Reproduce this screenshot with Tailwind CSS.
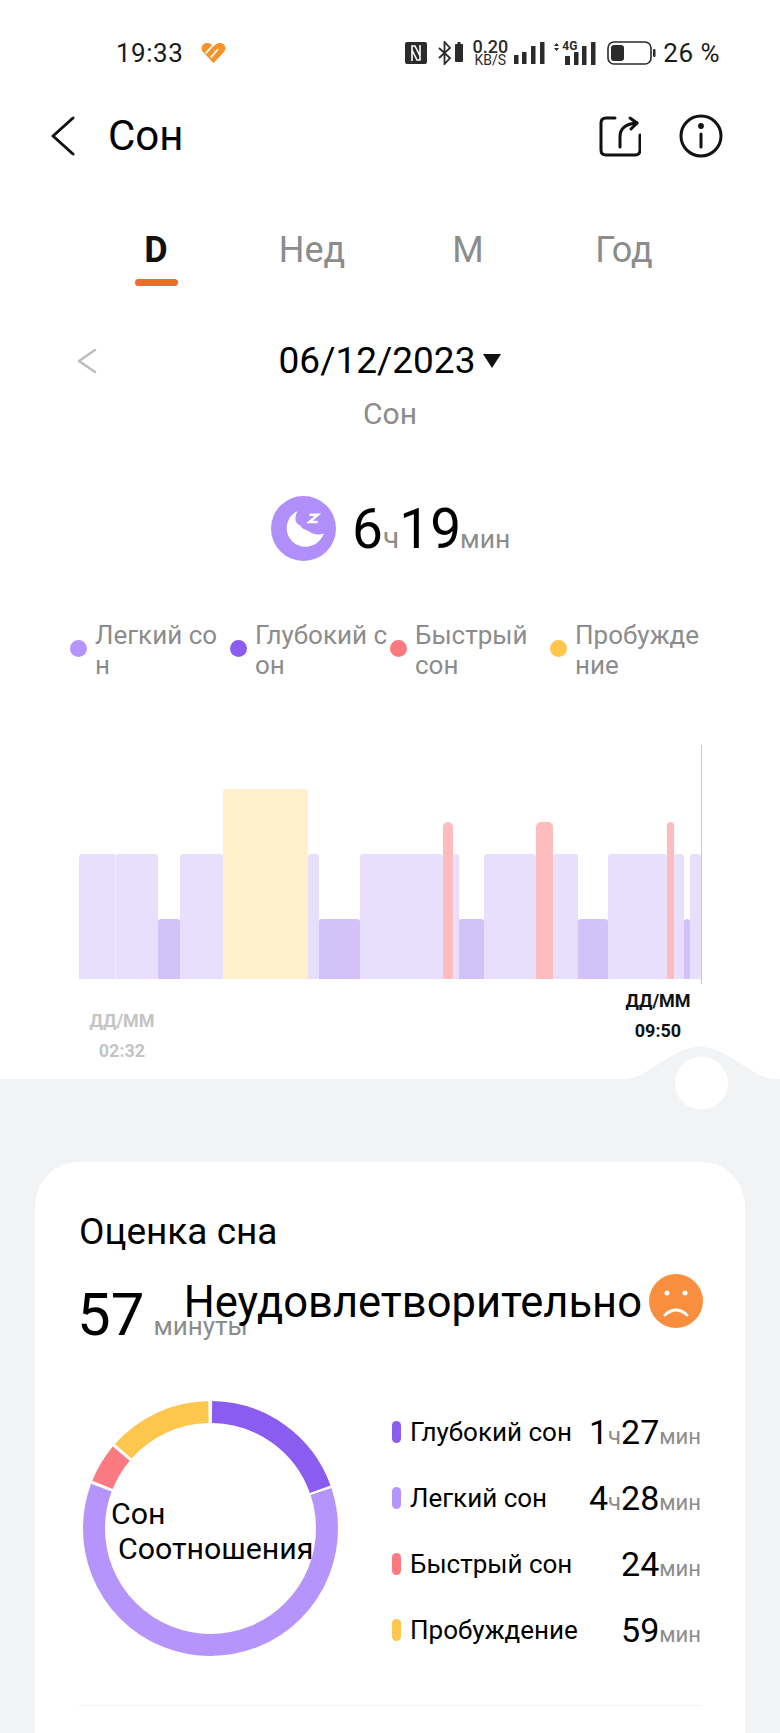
<!DOCTYPE html>
<html lang="ru">
  <head>
    <meta charset="UTF-8" />
    <meta name="viewport" content="width=device-width, initial-scale=1.0" />
    <title>Сон</title>
    <script src="https://cdn.jsdelivr.net/npm/@tailwindcss/browser@4"></script>
  </head>

  <body>
    <div class="relative flex h-[1733px] w-[780px] flex-col overflow-hidden bg-[#f1f3f5] font-['Roboto',sans-serif] text-black">
      <!-- top white part -->
      <div class="flex h-[1079px] flex-col bg-white">
        <!-- status bar -->
        <div class="mt-[38px] flex h-[30px] items-center pl-[116px] pr-[60px] text-[#1c1c1c]">
          <span class="text-[26px] leading-none tracking-[0.5px]">19:33</span>
          <svg class="ml-[18px] h-[20px] w-[25px]" viewBox="0 0 25 20">
            <path d="M12.500 20 L2 9 C-1 5.500 1 0 6 0 C9 0 11 1.500 12.500 4 C14 1.500 16 0 19 0 C24 0 26 5.500 23 9Z" fill="#f7922b" />
            <path d="M4.700 10.300 L12.300 2 M9.700 14.700 L17 6" stroke="#fff" stroke-width="1.800" />
          </svg>
          <svg class="ml-auto h-[22px] w-[22px]" viewBox="0 0 22 22">
            <rect width="22" height="22" rx="2" fill="#2b2b2b" />
            <path d="M7 19 V4 H10 L15 14 V10 M15 3 V18 H12 L7 8 V12" stroke="#fff" stroke-width="1.600" fill="none" />
          </svg>
          <svg class="ml-[11px] h-[24px] w-[25px]" viewBox="0 0 25 24">
            <path d="M1 7 L12 17 L6.500 23 V1 L12 7 L1 17" stroke="#2b2b2b" stroke-width="1.800" fill="none" />
            <rect x="17" y="3" width="8" height="18" rx="1" fill="#2b2b2b" />
            <rect x="19.500" y="1" width="3" height="3" fill="#2b2b2b" />
          </svg>
          <div class="ml-[8px] flex w-[38px] flex-col items-center text-[#2b2b2b]">
            <span class="text-[18px] leading-[14px] font-medium">0.20</span>
            <span class="mt-[1px] text-[14px] leading-[11px]">KB/S</span>
          </div>
          <svg class="ml-[4px] h-[22px] w-[32px]" viewBox="0 0 32 22" fill="#2b2b2b">
            <rect x="1" y="13" width="4.500" height="9" rx="0.500" />
            <rect x="9" y="10" width="4.500" height="12" rx="0.500" />
            <rect x="18" y="4" width="4.500" height="18" rx="0.500" />
            <rect x="27" y="0" width="4.500" height="22" rx="0.500" />
          </svg>
          <div class="relative ml-[8px] h-[24px] w-[44px]">
            <svg class="absolute left-0 top-0 h-[24px] w-[44px]" viewBox="0 0 44 24" fill="#2b2b2b">
              <path d="M1 5 L3.500 2 L6 5Z M1 7 L3.500 10 L6 7Z" />
              <rect x="12" y="15" width="5" height="9" rx="0.500" />
              <rect x="21" y="11" width="4.500" height="13" rx="0.500" />
              <rect x="29" y="5" width="4.500" height="19" rx="0.500" />
              <rect x="38" y="1" width="4.500" height="23" rx="0.500" />
            </svg>
            <span class="absolute left-[9px] top-[-1px] text-[12px] leading-[13px] font-bold text-[#2b2b2b]">4G</span>
          </div>
          <svg class="ml-[10px] h-[24px] w-[50px]" viewBox="0 0 50 24">
            <rect x="1" y="1" width="43" height="22" rx="6" fill="none" stroke="#2b2b2b" stroke-width="1.600" />
            <rect x="4" y="4" width="13" height="16" rx="3" fill="#2b2b2b" />
            <rect x="46" y="8" width="2.500" height="8" rx="1" fill="#2b2b2b" />
          </svg>
          <span class="ml-[6px] text-[26px] leading-none tracking-[0.5px]">26 %</span>
        </div>

        <!-- header -->
        <div class="mt-[46px] flex h-[44px] items-center pl-[50px] pr-[57px]">
          <svg class="h-[40px] w-[26px]" viewBox="0 0 26 40" fill="none" stroke="#111" stroke-width="3" stroke-linecap="round" stroke-linejoin="round">
            <path d="M23 2 L3 20 L23 38" />
          </svg>
          <span class="ml-[32px] text-[42px] leading-[44px]">Сон</span>
          <svg class="ml-auto h-[42px] w-[42px]" viewBox="0 0 42 42" fill="none" stroke="#111" stroke-width="3" stroke-linecap="round" stroke-linejoin="round">
            <path d="M16 3 H7 Q2 3 2 8 V35 Q2 40 7 40 H36 Q41 40 41 35 V20" />
            <path d="M21 32 V22 Q21 9 38 8" />
            <path d="M31 3 L38 8 L32 14" />
          </svg>
          <svg class="ml-[38px] h-[44px] w-[44px]" viewBox="0 0 44 44" fill="none" stroke="#111" stroke-width="3" stroke-linecap="round">
            <circle cx="22" cy="22" r="20" />
            <path d="M22 20 V33" />
            <circle cx="22" cy="12" r="1.400" fill="#111" />
          </svg>
        </div>

        <!-- tabs -->
        <div class="mt-[68px] grid grid-cols-[156px_156px_156px_156px] pl-[78px] text-[36px] leading-[48px] text-[#8c8c8c]">
          <div class="flex flex-col items-center">
            <span class="font-bold text-[#111]">D</span>
            <span class="mt-[5px] h-[7px] w-[43px] rounded-full bg-[#f26b2e]"></span>
          </div>
          <span class="text-center">Нед</span>
          <span class="text-center">М</span>
          <span class="text-center">Год</span>
        </div>

        <!-- date -->
        <div class="mt-[53px] grid grid-cols-[1fr_auto_1fr] items-center">
          <svg class="ml-[77px] h-[26px] w-[20px]" viewBox="0 0 20 26" fill="none" stroke="#bdbdbd" stroke-width="2.500" stroke-linecap="round" stroke-linejoin="round">
            <path d="M18 2 L2 13 L18 24" />
          </svg>
          <div class="flex items-center">
            <span class="text-[37px] leading-[44px]">06/12/2023</span>
            <svg class="ml-[8px] h-[14px] w-[18px]" viewBox="0 0 18 14"><path d="M0 0 H18 L9 14Z" fill="#111" /></svg>
          </div>
          <span></span>
        </div>
        <p class="mt-[13px] text-center text-[30px] leading-[36px] text-[#8c8c8c]">Сон</p>

        <!-- total -->
        <div class="mt-[64px] flex items-center pl-[271px]">
          <svg class="h-[65px] w-[65px]" viewBox="0 0 64 64">
            <circle cx="32" cy="32" r="32" fill="#b08ffb" />
            <path d="M26 15 C19 18 15.500 25 15.500 32 C15.500 42 24 50 34 50 C42 50 49 45 52 37 C47 39 41 38 36 34 C33 33 30 32 29 29 C26 28 24 26 24 23 C24 20 25 17 26 15Z" fill="#fff" />
            <path d="M38 18.500 H46 L38 25.500 H46" fill="none" stroke="#fff" stroke-width="2.500" />
          </svg>
          <div class="ml-[16px] flex items-baseline">
            <span class="text-[55px] leading-[64px]">6</span>
            <span class="text-[30px] text-[#8c8c8c]">ч</span>
            <span class="text-[55px] leading-[64px]">19</span>
            <span class="ml-[-1px] text-[26.5px] text-[#8c8c8c]">мин</span>
          </div>
        </div>

        <!-- legend -->
        <div class="mt-[59px] grid grid-cols-[160px_160px_160px_160px] pl-[70px] text-[26px] leading-[30px] text-[#8c8c8c]">
          <div class="flex items-center whitespace-nowrap">
            <span class="mb-[3px] h-[17px] w-[17px] shrink-0 rounded-full bg-[#b594fb]"></span>
            <span class="ml-[8px]">Легкий со<br />н</span>
          </div>
          <div class="flex items-center whitespace-nowrap">
            <span class="mb-[3px] h-[17px] w-[17px] shrink-0 rounded-full bg-[#8b5cf0]"></span>
            <span class="ml-[8px]">Глубокий с<br />он</span>
          </div>
          <div class="flex items-center whitespace-nowrap">
            <span class="mb-[3px] h-[17px] w-[17px] shrink-0 rounded-full bg-[#fb7a81]"></span>
            <span class="ml-[8px]">Быстрый<br />сон</span>
          </div>
          <div class="flex items-center whitespace-nowrap">
            <span class="mb-[3px] h-[17px] w-[17px] shrink-0 rounded-full bg-[#fec64c]"></span>
            <span class="ml-[8px]">Пробужде<br />ние</span>
          </div>
        </div>

        <!-- chart -->
        <div class="relative mt-[65px] flex h-[234px] items-end pl-[79px]">
          <div class="absolute bottom-[-5px] left-[701px] h-[239px] w-px bg-[#c9c9c9]"></div>
          <div class="h-[125px] w-[36px] rounded-t-[3px] bg-[#e8dffd]"></div>
          <div class="h-[125px] w-px bg-[#f1ecfe]"></div>
          <div class="h-[125px] w-[42px] rounded-t-[3px] bg-[#e8dffd]"></div>
          <div class="h-[60px] w-[22px] rounded-t-[3px] bg-[#d3c2f8]"></div>
          <div class="h-[125px] w-[43px] rounded-t-[3px] bg-[#e8dffd]"></div>
          <div class="h-[190px] w-[85px] rounded-t-[3px] bg-[#fff0cc]"></div>
          <div class="h-[125px] w-[11px] rounded-t-[3px] bg-[#e8dffd]"></div>
          <div class="h-[60px] w-[41px] rounded-t-[3px] bg-[#d3c2f8]"></div>
          <div class="h-[125px] w-[83px] rounded-t-[3px] bg-[#e8dffd]"></div>
          <div class="h-[157px] w-[10px] rounded-t-[5px] bg-[#ffbcbf]"></div>
          <div class="h-[125px] w-[6px] rounded-t-[3px] bg-[#e8dffd]"></div>
          <div class="h-[60px] w-[25px] rounded-t-[3px] bg-[#d3c2f8]"></div>
          <div class="h-[125px] w-[52px] rounded-t-[3px] bg-[#e8dffd]"></div>
          <div class="h-[157px] w-[17px] rounded-t-[5px] bg-[#ffbcbf]"></div>
          <div class="h-[125px] w-[25px] rounded-t-[3px] bg-[#e8dffd]"></div>
          <div class="h-[60px] w-[30px] rounded-t-[3px] bg-[#d3c2f8]"></div>
          <div class="h-[125px] w-[59px] rounded-t-[3px] bg-[#e8dffd]"></div>
          <div class="h-[157px] w-[7px] rounded-t-[4px] bg-[#ffbcbf]"></div>
          <div class="h-[125px] w-[10px] rounded-t-[3px] bg-[#e8dffd]"></div>
          <div class="h-[60px] w-[6px] rounded-t-[3px] bg-[#d3c2f8]"></div>
          <div class="h-[125px] w-[11px] rounded-t-[3px] bg-[#e8dffd]"></div>
        </div>

        <!-- chart labels -->
        <div class="mt-[7px] flex items-start justify-between pl-[82px] pr-[82px] text-[18px] font-bold leading-[30px]">
          <div class="mt-[20px] flex w-[80px] flex-col items-center text-[#c4c4c4]">
            <span>ДД/ММ</span>
            <span>02:32</span>
          </div>
          <div class="flex w-[80px] flex-col items-center text-[#111]">
            <span>ДД/ММ</span>
            <span>09:50</span>
          </div>
        </div>
      </div>

      <!-- slider bump over the edge of the white part -->
      <svg class="absolute left-[620px] top-[1040px] h-[72px] w-[160px]" viewBox="0 0 160 72">
        <path d="M0 39.500 C18 39.500 28 30 40 23 C55 14 65 6.700 80 6.700 C95 6.700 107 15 123 25 C135 33 145 39.500 160 39.500 V72 H0Z" fill="#f1f3f5" />
        <circle cx="81.500" cy="43" r="26.500" fill="#fff" />
      </svg>

      <!-- score card -->
      <div class="mx-[35px] mt-[83px] flex-1 rounded-t-[44px] bg-white px-[44px]">
        <p class="mt-[49px] text-[37px] leading-[42px]">Оценка сна</p>
        <div class="mt-[27px] flex h-[70px] items-start">
          <div class="ml-[-2px] flex items-baseline">
            <span class="text-[60px] leading-[70px]">57</span>
            <span class="ml-[9px] text-[26px] leading-[30px] text-[#8c8c8c]">минуты</span>
          </div>
          <span class="ml-[-64px] mt-[-2px] whitespace-nowrap text-[43.5px] leading-[50px]">Неудовлетворительно</span>
          <svg class="ml-[7px] mt-[-6px] h-[54px] w-[54px] shrink-0" viewBox="0 0 54 54">
            <circle cx="27" cy="27" r="27" fill="#f98f3e" />
            <circle cx="18" cy="19" r="2.500" fill="#fff" />
            <circle cx="36" cy="19" r="2.500" fill="#fff" />
            <path d="M16 41 Q27 31 38 41" fill="none" stroke="#fff" stroke-width="3" stroke-linecap="round" />
          </svg>
        </div>

        <div class="mt-[51px] flex items-start">
          <!-- donut -->
          <div class="relative ml-[4px] h-[255px] w-[255px] shrink-0">
            <svg class="h-[255px] w-[255px] -rotate-90" viewBox="0 0 255 255" fill="none" stroke-width="22">
              <circle cx="127.500" cy="127.500" r="116.500" pathLength="360" stroke="#8b5cf0" stroke-dasharray="69.500 360" stroke-dashoffset="-0.750" />
              <circle cx="127.500" cy="127.500" r="116.500" pathLength="360" stroke="#b594fb" stroke-dasharray="219 360" stroke-dashoffset="-71.500" />
              <circle cx="127.500" cy="127.500" r="116.500" pathLength="360" stroke="#fb7a81" stroke-dasharray="18 360" stroke-dashoffset="-292" />
              <circle cx="127.500" cy="127.500" r="116.500" pathLength="360" stroke="#fec64c" stroke-dasharray="47.500 360" stroke-dashoffset="-311.500" />
            </svg>
            <div class="absolute left-[28px] top-[95px] whitespace-nowrap text-[30.3px] leading-[35px]">
              <p>Сон</p>
              <p class="ml-[7px]">Соотношения</p>
            </div>
          </div>

          <!-- breakdown -->
          <div class="ml-[54px] mt-[11px] flex w-[310px] flex-col gap-[26px]">
            <div class="flex h-[40px] items-center">
              <span class="h-[22px] w-[9px] rounded-full bg-[#8b5cf0]"></span>
              <span class="ml-[9px] text-[26px]">Глубокий сон</span>
              <div class="ml-auto flex items-baseline">
                <span class="text-[34px]">1</span><span class="text-[24px] text-[#8c8c8c]">ч</span><span class="text-[34px]">27</span><span class="text-[22px] text-[#8c8c8c]">мин</span>
              </div>
            </div>
            <div class="flex h-[40px] items-center">
              <span class="h-[22px] w-[9px] rounded-full bg-[#b594fb]"></span>
              <span class="ml-[9px] text-[26px]">Легкий сон</span>
              <div class="ml-auto flex items-baseline">
                <span class="text-[34px]">4</span><span class="text-[24px] text-[#8c8c8c]">ч</span><span class="text-[34px]">28</span><span class="text-[22px] text-[#8c8c8c]">мин</span>
              </div>
            </div>
            <div class="flex h-[40px] items-center">
              <span class="h-[22px] w-[9px] rounded-full bg-[#fb7a81]"></span>
              <span class="ml-[9px] text-[26px]">Быстрый сон</span>
              <div class="ml-auto flex items-baseline">
                <span class="text-[34px]">24</span><span class="text-[22px] text-[#8c8c8c]">мин</span>
              </div>
            </div>
            <div class="flex h-[40px] items-center">
              <span class="h-[22px] w-[9px] rounded-full bg-[#fec64c]"></span>
              <span class="ml-[9px] text-[26px]">Пробуждение</span>
              <div class="ml-auto flex items-baseline">
                <span class="text-[34px]">59</span><span class="text-[22px] text-[#8c8c8c]">мин</span>
              </div>
            </div>
          </div>
        </div>

        <div class="mt-[49px] h-[1px] bg-[#f1f3f5]"></div>
      </div>
    </div>
  </body>
</html>
